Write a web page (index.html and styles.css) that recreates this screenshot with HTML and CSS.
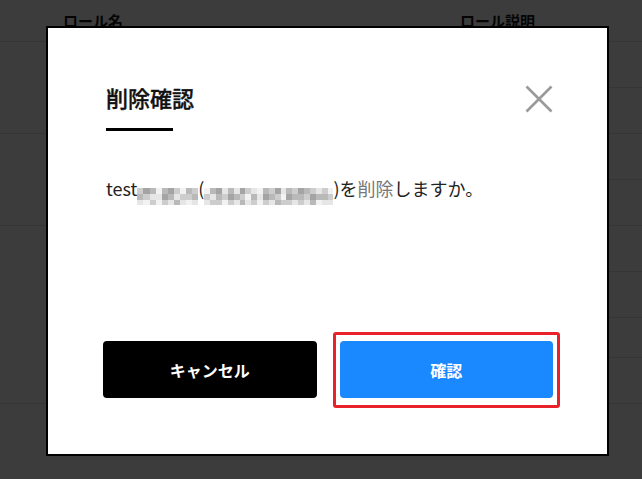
FILE: index.html
```html
<!DOCTYPE html>
<html lang="ja">
<head>
<meta charset="utf-8">
<title>削除確認</title>
<link rel="stylesheet" href="styles.css">
</head>
<body>
<div class="page">
  <div class="thead">
    <div class="c1">ロール名</div>
    <div class="c2">ロール説明</div>
  </div>
  <div class="group">
    <div class="c1"></div>
    <div class="c2"><div class="sub"></div><div class="sub"></div></div>
  </div>
  <div class="group">
    <div class="c1"></div>
    <div class="c2"><div class="sub"></div><div class="sub"></div></div>
  </div>
  <div class="group">
    <div class="c1"></div>
    <div class="c2"><div class="sub"></div><div class="sub"></div><div class="sub short"></div><div class="sub"></div></div>
  </div>
</div>

<div class="overlay">
  <div class="modal">
    <div class="head">
      <h2 class="title">削除確認</h2>
      <button class="close" aria-label="閉じる">
        <svg width="28" height="28" viewBox="0 0 28 28"><path d="M1.5 1.5 L26.5 26.5 M26.5 1.5 L1.5 26.5" stroke="#9a9a9a" stroke-width="2.6" fill="none"/></svg>
      </button>
    </div>
    <div class="rule"></div>
    <p class="msg">test<span class="mosaic m1"><i class="b"></i><i class="c"></i><i class="a"></i><i class="d"></i><i class="b"></i><i class="e"></i><i class="c"></i><i class="a"></i><i class="b"></i><i class="e"></i><i class="a"></i><i class="e"></i><i class="c"></i><i class="d"></i><i class="b"></i><i class="d"></i><i class="c"></i><i class="a"></i><i class="b"></i><i class="a"></i><i class="c"></i><i class="e"></i><i class="b"></i><i class="a"></i><i class="c"></i><i class="b"></i><i class="e"></i><i class="b"></i><i class="c"></i><i class="a"></i></span>(<span class="mosaic m2"><i class="e"></i><i class="b"></i><i class="a"></i><i class="c"></i><i class="a"></i><i class="b"></i><i class="d"></i><i class="c"></i><i class="b"></i><i class="a"></i><i class="b"></i><i class="e"></i><i class="c"></i><i class="d"></i><i class="b"></i><i class="a"></i><i class="c"></i><i class="a"></i><i class="d"></i><i class="b"></i><i class="c"></i><i class="b"></i><i class="e"></i><i class="a"></i><i class="a"></i><i class="c"></i><i class="b"></i><i class="e"></i><i class="a"></i><i class="e"></i><i class="c"></i><i class="d"></i><i class="b"></i><i class="b"></i><i class="c"></i><i class="a"></i><i class="d"></i><i class="b"></i><i class="c"></i><i class="a"></i><i class="e"></i><i class="b"></i><i class="c"></i><i class="d"></i><i class="b"></i><i class="b"></i><i class="c"></i><i class="a"></i><i class="d"></i><i class="c"></i><i class="b"></i><i class="c"></i><i class="b"></i><i class="a"></i><i class="b"></i><i class="d"></i><i class="c"></i><i class="a"></i><i class="c"></i><i class="e"></i><i class="b"></i><i class="c"></i><i class="a"></i><i class="e"></i><i class="b"></i><i class="a"></i></span>)を<span class="del">削除</span>しますか。</p>
    <div class="actions">
      <button class="btn cancel">キャンセル</button>
      <div class="confirm-wrap">
        <button class="btn ok">確認</button>
        <span class="highlight"></span>
      </div>
    </div>
  </div>
</div>
</body>
</html>
```
FILE: styles.css
```css
html, body {
  margin: 0;
  padding: 0;
  background: #fff;
  font-family: "Noto Sans CJK JP", "Noto Sans", sans-serif;
  color: #222;
}

.page {
  width: 642px;
}

.thead,
.group {
  display: grid;
  grid-template-columns: 445px 1fr;
  border-bottom: 1px solid #e2e2e2;
}

.thead {
  height: 41px;
  align-items: center;
  font-size: 15px;
  font-weight: 700;
  color: #111;
}

.thead .c1 {
  padding-left: 63px;
}

.thead .c2 {
  padding-left: 15px;
}

.sub {
  height: 45px;
}

.sub.short {
  height: 39px;
}

.sub + .sub {
  border-top: 1px solid #e2e2e2;
}

.overlay {
  position: fixed;
  inset: 0;
  background: rgba(0, 0, 0, 0.765);
}

.modal {
  position: absolute;
  left: 46px;
  top: 26px;
  width: 563px;
  height: 430px;
  box-sizing: border-box;
  border: 2px solid #000;
  background: #fff;
  padding: 54px 54px 56px 55px;
  display: flex;
  flex-direction: column;
}

.head {
  display: flex;
  align-items: center;
  justify-content: space-between;
  height: 30px;
  padding-left: 3px;
}

.title {
  margin: 0;
  font-size: 22px;
  line-height: 30px;
  font-weight: 500;
  color: #111;
  -webkit-text-stroke: 0.35px #111;
}

.close {
  border: 0;
  background: none;
  padding: 0;
  width: 28px;
  height: 28px;
  margin-top: 3px;
  display: flex;
}

.rule {
  width: 67px;
  height: 3px;
  background: #000;
  margin: 16px 0 0 3px;
}

.msg {
  margin: 44px 0 0;
  padding-left: 3px;
  font-size: 18px;
  line-height: 26px;
  color: #222;
  white-space: nowrap;
}

.mosaic {
  display: inline-grid;
  height: 17px;
  grid-template-rows: repeat(3, 1fr);
  grid-auto-flow: column;
  grid-auto-columns: 1fr;
  vertical-align: 2px;
}

.m1 {
  width: 61px;
}

.m2 {
  width: 129px;
}

.mosaic i {
  display: block;
}

.mosaic .a { background: #e6e6e6; }
.mosaic .b { background: #cdcdcd; }
.mosaic .c { background: #b9b9b9; }
.mosaic .d { background: #a4a4a4; }
.mosaic .e { background: #f2f2f2; }

.del {
  color: #777;
}

.actions {
  margin-top: auto;
  display: flex;
  gap: 23px;
  height: 57px;
}

.btn {
  border: 0;
  padding: 0;
  border-radius: 4px;
  font-family: inherit;
  font-size: 16px;
  font-weight: 700;
  color: #fff;
  cursor: pointer;
}

.cancel {
  flex: 1 1 0;
  min-width: 0;
  background: #000;
}

.confirm-wrap {
  flex: 1 1 0;
  min-width: 0;
  position: relative;
  display: flex;
}

.ok {
  flex: 1;
  background: #1a88ff;
}

.highlight {
  position: absolute;
  left: -7px;
  right: -7px;
  top: -9px;
  bottom: -10px;
  border: 3px solid #e8212b;
  border-radius: 3px;
  pointer-events: none;
}
```
